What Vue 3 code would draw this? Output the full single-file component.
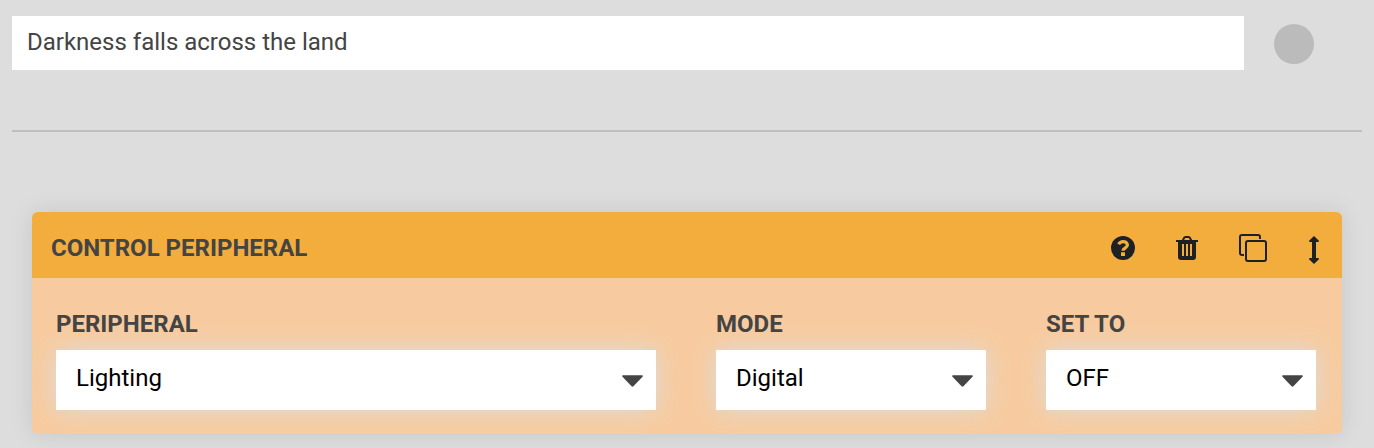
<script setup>
const fields = [
  { label: 'PERIPHERAL', value: 'Lighting', size: 'wide' },
  { label: 'MODE', value: 'Digital', size: 'narrow' },
  { label: 'SET TO', value: 'OFF', size: 'narrow' },
]
</script>

<template>
  <main class="page">
    <div class="top">
      <div class="title-input">Darkness falls across the land</div>
      <span class="dot"></span>
    </div>
    <hr class="rule" />
    <section class="card">
      <header class="head">
        <h2>CONTROL PERIPHERAL</h2>
        <div class="icons">
          <svg class="help" viewBox="0 0 24 24"><circle cx="12" cy="12" r="12" fill="currentColor"/><path d="M7.600 8.300C8.600 6.500 10.200 5.600 12.100 5.600c2.600 0 4.300 1.500 4.300 3.400 0 3.300-4.400 3-4.400 5.800" fill="none" stroke="#f3ad3d" stroke-width="3.200"/><path d="M10 16.200h4v3.800h-4z" fill="#f3ad3d"/></svg>
          <svg class="trash" viewBox="0 0 22 24"><path d="M6.800 4.500 8 2q.5-1 1.500-1h3q1 0 1.500 1l1.200 2.500" fill="none" stroke="currentColor" stroke-width="2"/><path fill="currentColor" fill-rule="evenodd" d="M0 4h22v2h-2v15q0 3-3 3H5q-3 0-3-3V6H0zM6 8v12h2V8zM10 8v12h2V8zM14 8v12h2V8z"/></svg>
          <svg class="copy" viewBox="0 0 28 28" fill="none" stroke="currentColor" stroke-width="2"><rect x="7" y="7" width="20" height="20" rx="2"/><path d="M5 21H3a2 2 0 0 1-2-2V3a2 2 0 0 1 2-2h16a2 2 0 0 1 2 2v2"/></svg>
          <svg class="move" viewBox="0 0 10 28"><path fill="currentColor" d="M5 0l4.700 4.500q.8 1.500-.7 1.500H7v16h2q1.500 0 .7 1.500L5 28 .3 23.500Q-.5 22 1 22h2V6H1Q-.5 6 .3 4.500z"/></svg>
        </div>
      </header>
      <div class="fields">
        <div v-for="f in fields" :key="f.label" class="field" :class="f.size">
          <div class="label">{{ f.label }}</div>
          <div class="select">
            <span>{{ f.value }}</span>
            <svg class="caret" viewBox="0 0 22 12"><path fill="currentColor" d="M1.200 0h19.600q1.700 0 .7 1.500L12 11.400q-1 1-2 0L.5 1.500Q-.5 0 1.200 0z"/></svg>
          </div>
        </div>
      </div>
    </section>
  </main>
</template>

<style>
body { background: #ddd; }
</style>
<style scoped>
.page { box-sizing: border-box; height: 448px; padding: 16px 12px 0; overflow: hidden; background: #ddd; font-family: Roboto, sans-serif; font-size: 24px; color: #444; }
.top { display: flex; align-items: center; gap: 30px; }
.title-input { box-sizing: border-box; width: 1232px; height: 54px; padding: 0 15px; line-height: 52px; background: #fff; }
.dot { width: 40px; height: 40px; margin-top: 2px; border-radius: 50%; background: #bbb; }
.rule { height: 2px; margin: 60px 0 80px; border: 0; background: #bebebe; }
.card { width: 1310px; height: 222px; margin-left: 20px; border-radius: 6px; overflow: hidden; background: #f7cb9f; box-shadow: 0 0 24px rgba(0,0,0,.1); }
.head { box-sizing: border-box; display: flex; align-items: center; justify-content: space-between; height: 66px; padding: 6px 23px 0 19px; background: #f3ad3d; }
h2 { margin: -1px 0 0; font-size: 24px; line-height: 28px; font-weight: 700; }
.icons { display: flex; align-items: flex-start; margin-top: 3px; color: #1d2125; }
.icons svg { display: block; }
.help { width: 24px; height: 24px; margin: 1px 41px 0 0; }
.trash { width: 22px; height: 24px; margin: 1px 41px 0 0; }
.copy { width: 28px; height: 28px; margin: -1px 42px 0 0; }
.move { width: 10px; height: 28px; margin-top: 1px; }
.fields { display: flex; gap: 60px; padding: 30px 24px 0; }
.wide { width: 600px; }
.narrow { width: 270px; }
.label { height: 42px; line-height: 32px; font-weight: 700; }
.select { box-sizing: border-box; display: flex; align-items: center; justify-content: space-between; height: 60px; padding: 0 13px 0 20px; background: #fff; color: #000; box-shadow: 0 0 24px #ddd; }
.select span { line-height: 28px; padding-bottom: 4px; }
.caret { width: 21px; height: 12px; margin-top: 2px; color: #444; }
</style>
